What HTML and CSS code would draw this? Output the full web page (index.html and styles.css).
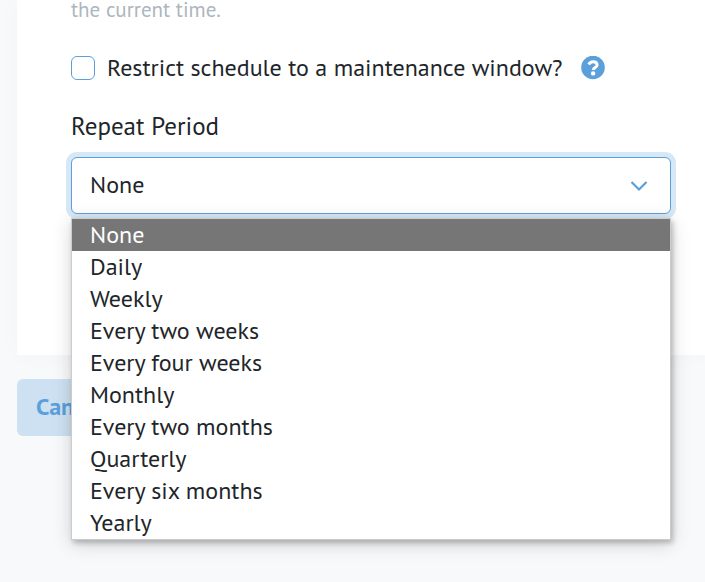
FILE: index.html
```html
<!DOCTYPE html>
<html lang="en">
<head>
<meta charset="utf-8">
<title>Schedule</title>
<link rel="stylesheet" href="styles.css">
</head>
<body>
<main class="page">
  <section class="card">
    <p class="hint">the current time.</p>
    <div class="check-row">
      <span class="checkbox"></span>
      <span class="check-label">Restrict schedule to a maintenance window?</span>
      <svg class="help" viewBox="0 0 24 24" width="24" height="24">
        <circle cx="12" cy="11.5" r="11.8" fill="#5b9fdb"/>
        <path d="M7.7 8.5C8.7 6.6 10.1 5.7 12.1 5.7c2.5 0 4 1.3 4 3.2 0 2.8-3.8 2.5-3.8 5.1" fill="none" stroke="#fff" stroke-width="3"/>
        <circle cx="12.1" cy="17.4" r="2.2" fill="#fff"/>
      </svg>
    </div>
    <div class="field-label">Repeat Period</div>
    <div class="select">
      <span class="value">None</span>
      <svg class="chevron" viewBox="0 0 18 12" width="18" height="12"><path d="M1.5 2 9 9.5 16.5 2" fill="none" stroke="#5b9fdb" stroke-width="2.2"/></svg>
      <div class="menu">
        <div class="option selected">None</div>
        <div class="option">Daily</div>
        <div class="option">Weekly</div>
        <div class="option">Every two weeks</div>
        <div class="option">Every four weeks</div>
        <div class="option">Monthly</div>
        <div class="option">Every two months</div>
        <div class="option">Quarterly</div>
        <div class="option">Every six months</div>
        <div class="option">Yearly</div>
      </div>
    </div>
  </section>
  <div class="cancel">Cancel</div>
</main>
</body>
</html>
```
FILE: styles.css
```css
* { box-sizing: border-box; }
body {
  margin: 0;
  background: #f7f9fb;
  color: #212529;
  font: 24px/32px "PT Sans", Lato, "Noto Sans", sans-serif;
  white-space: nowrap;
}
.page { height: 582px; overflow: hidden; padding-left: 17px; }
.card {
  height: 355px;
  padding-left: 54px;
  background: #fff;
  box-shadow: 0 0 24px rgba(0, 0, 0, .025);
}
.hint { height: 52px; margin: 0; line-height: 20px; color: #adb5bd; font-size: 21px; }
.check-row { display: flex; align-items: center; height: 32px; }
.checkbox { width: 24px; height: 24px; margin-right: 12px; border: 1px solid #5b9fdb; border-radius: 6px; }
.check-label { width: 455px; margin-right: 19px; }
.help { display: block; }
.field-label { margin: 26px 0 15px; font-size: 25px; }
.select {
  position: relative;
  display: flex;
  align-items: center;
  justify-content: space-between;
  width: 600px;
  height: 57px;
  padding: 0 22px 0 18px;
  border: 1px solid #5b9fdb;
  border-radius: 6px;
  background: #fff;
  box-shadow: 0 0 0 5px #d6e7f5;
}
.value { padding-bottom: 2px; }
.menu {
  position: absolute;
  top: 60px;
  left: -1px;
  width: 600px;
  height: 322px;
  border: 1px solid #ccc;
  background: #fff;
  box-shadow: 2px 3px 5px rgba(0, 0, 0, .22), 0 4px 18px rgba(0, 0, 0, .17);
}
.option { height: 32px; padding-left: 18px; }
.selected { background: #767676; color: #fff; }
.cancel {
  width: 112px;
  height: 57px;
  margin-top: 24px;
  padding-left: 19px;
  border-radius: 6px;
  background: #cee1f2;
  color: #5b9fdb;
  font-weight: 700;
  line-height: 55px;
}
```
